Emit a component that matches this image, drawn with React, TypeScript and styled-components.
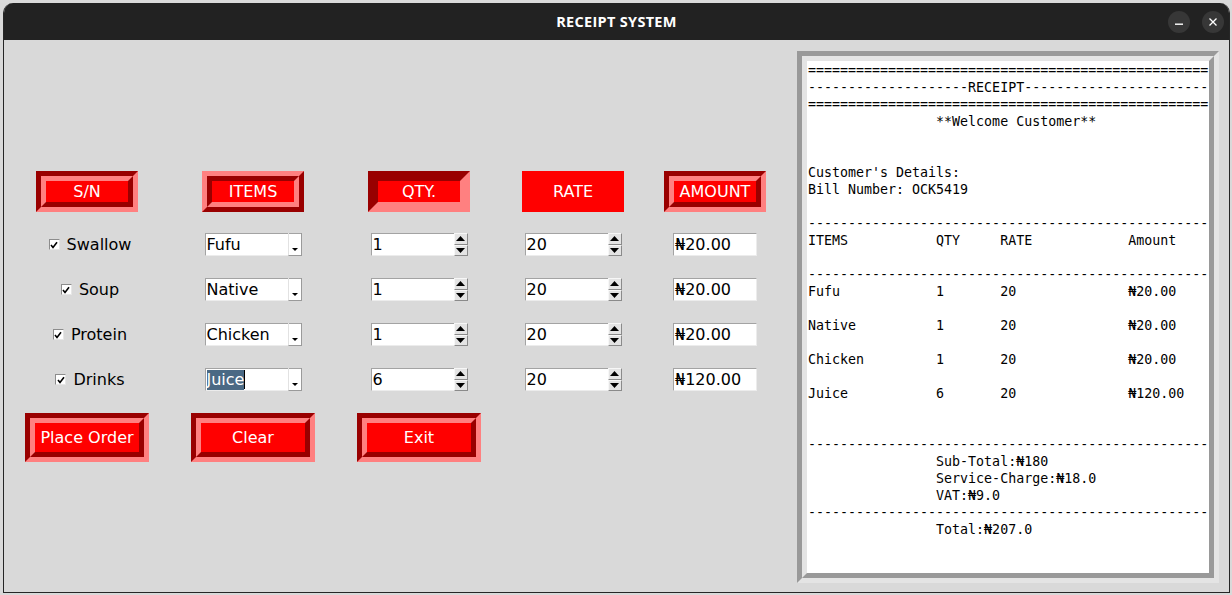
import React from "react";
import styled, { createGlobalStyle, css } from "styled-components";

const GlobalStyle = createGlobalStyle`
  html, body { margin: 0; padding: 0; }
  body {
    background: #d9d9d9;
    font-family: "DejaVu Sans", sans-serif;
    overflow: hidden;
  }
  #root { width: 1232px; height: 595px; }
`;

const DARK = "#990000";
const LIGHT = "#ff8080";
const RED = "#ff0000";

type Relief = "groove" | "ridge" | "sunken" | "flat";

const Desktop = styled.div`
  width: 1232px;
  height: 595px;
  overflow: hidden;
  display: flex;
  flex-direction: column;
  background: #d9d9d9;
`;

const BackStrip = styled.div`
  flex: none;
  height: 3px;
  background: #dadada;
`;

const Window = styled.div`
  flex: none;
  margin-left: 3px;
  width: 1227px;
  height: 590px;
  box-sizing: border-box;
  display: flex;
  flex-direction: column;
  border: 1px solid #262626;
  border-top: none;
  border-radius: 10px 10px 0 0;
  background: #d9d9d9;
  overflow: hidden;
`;

const TitleBar = styled.div`
  flex: none;
  height: 37px;
  background: #222222;
  display: grid;
  grid-template-columns: 1fr auto 1fr;
  align-items: center;
  padding-right: 5px;
  padding-left: 5px;
`;

const Title = styled.div`
  grid-column: 2;
  color: #ffffff;
  font: 700 14.5px "Open Sans", "DejaVu Sans", sans-serif;
  letter-spacing: 0.3px;
`;

const Controls = styled.div`
  grid-column: 3;
  justify-self: end;
  display: flex;
  gap: 12px;
`;

const CircleButton = styled.div`
  width: 22px;
  height: 22px;
  border-radius: 50%;
  background: #373737;
  display: flex;
  align-items: center;
  justify-content: center;
`;

const Content = styled.div`
  flex: 1;
  display: flex;
  align-items: flex-start;
  padding: 11px 10px 0 16px;
`;

const OrderGrid = styled.div`
  flex: none;
  margin-top: 120px;
  display: grid;
  grid-template-columns: 134px 198px 134px 174px 110px;
  grid-template-rows: 51px 45px 45px 45px 45px 60px;
  justify-items: center;
  align-items: center;
`;

const Bevel = styled.div<{ $relief: Relief }>`
  box-sizing: border-box;
  background: ${RED};
  ${({ $relief }) =>
    $relief === "groove"
      ? css`
          border: 5px solid;
          border-color: ${DARK} ${LIGHT} ${LIGHT} ${DARK};
        `
      : $relief === "ridge"
      ? css`
          border: 5px solid;
          border-color: ${LIGHT} ${DARK} ${DARK} ${LIGHT};
        `
      : $relief === "sunken"
      ? css`
          border: 10px solid;
          border-color: ${DARK} ${LIGHT} ${LIGHT} ${DARK};
        `
      : css`
          border: none;
        `}
`;

const BevelFace = styled.div<{ $relief: Relief }>`
  box-sizing: border-box;
  height: 100%;
  display: flex;
  align-items: center;
  justify-content: center;
  color: #ffffff;
  font: 16px "DejaVu Sans", sans-serif;
  white-space: nowrap;
  ${({ $relief }) =>
    $relief === "groove"
      ? css`
          border: 5px solid;
          border-color: ${LIGHT} ${DARK} ${DARK} ${LIGHT};
        `
      : $relief === "ridge"
      ? css`
          border: 5px solid;
          border-color: ${DARK} ${LIGHT} ${LIGHT} ${DARK};
        `
      : css`
          border: none;
        `}
`;

const HeaderCell = styled(Bevel)`
  width: 102px;
  height: 41px;
  align-self: start;
`;

const ActionButton = styled(Bevel)`
  width: 124px;
  height: 49px;
  align-self: end;
  cursor: pointer;
`;

const CheckLabel = styled.label`
  display: flex;
  align-items: center;
  gap: 7px;
  padding-left: 6px;
  font: 16px "DejaVu Sans", sans-serif;
  color: #000000;
`;

const CheckBox = styled.span`
  width: 11px;
  height: 11px;
  box-sizing: border-box;
  background: #ffffff;
  border: 1px solid;
  border-color: #8c8c8c #e6e6e6 #e6e6e6 #8c8c8c;
  display: flex;
  align-items: center;
  justify-content: center;
`;

const Field = styled.div<{ $w: number }>`
  width: ${(p) => p.$w}px;
  height: 23px;
  box-sizing: border-box;
  background: #ffffff;
  border: 1px solid;
  border-color: #a3a3a3 #ececec #ececec #a3a3a3;
  display: flex;
  align-items: stretch;
`;

const FieldText = styled.div`
  flex: 1;
  padding-left: 1px;
  font: 16px/21px "DejaVu Sans", sans-serif;
  color: #000000;
  white-space: nowrap;
  overflow: hidden;
  display: flex;
  align-items: center;
`;

const Selected = styled.span`
  background: #4a6984;
  color: #ffffff;
  line-height: 20px;
`;

const Caret = styled.span`
  width: 1px;
  height: 19px;
  background: #000000;
`;

const ComboArrow = styled.div`
  flex: none;
  width: 14px;
  box-sizing: border-box;
  border-left: 1px solid #e2e2e2;
  border-right: 1px solid #9a9a9a;
  border-bottom: 1px solid #9a9a9a;
  margin: -1px -1px -1px 0;
  display: flex;
  align-items: flex-end;
  justify-content: center;
  padding-bottom: 4px;
`;

const SpinButtons = styled.div`
  flex: none;
  width: 14px;
  display: flex;
  flex-direction: column;
  margin: -1px -1px -1px 0;
`;

const SpinHalf = styled.div`
  flex: 1;
  box-sizing: border-box;
  background: #e4e4e4;
  border: 1px solid;
  border-color: #f7f7f7 #8a8a8a #8a8a8a #f7f7f7;
  display: flex;
  align-items: center;
  justify-content: center;
`;

const ReceiptOuter = styled.div`
  margin-left: auto;
  flex: none;
  width: 422px;
  height: 532px;
  box-sizing: border-box;
  border: 5px solid;
  border-color: #999999 #e4e4e4 #e4e4e4 #999999;
`;

const ReceiptInner = styled.div`
  height: 100%;
  box-sizing: border-box;
  border: 5px solid;
  border-color: #e4e4e4 #999999 #999999 #e4e4e4;
  background: #ffffff;
  padding: 1px 0 0 1px;
  overflow: hidden;
`;

const ReceiptText = styled.pre`
  margin: 0;
  font: 13.3px/17px "DejaVu Sans Mono", monospace;
  color: #000000;
  white-space: pre;
`;

const Check = () => (
  <svg width="8" height="8" viewBox="0 0 8 8">
    <path d="M1 4 L3 6.5 L7 1.2" fill="none" stroke="#000" strokeWidth="1.6" />
  </svg>
);

const DownArrow = () => (
  <svg width="6" height="3" viewBox="0 0 6 3">
    <polygon points="0,0 6,0 3,3" fill="#000" />
  </svg>
);

const UpTri = () => (
  <svg width="9" height="5" viewBox="0 0 9 5">
    <polygon points="0,5 9,5 4.5,0" fill="#000" />
  </svg>
);

const DownTri = () => (
  <svg width="9" height="5" viewBox="0 0 9 5">
    <polygon points="0,0 9,0 4.5,5" fill="#000" />
  </svg>
);

const headers: { text: string; relief: Relief }[] = [
  { text: "S/N", relief: "groove" },
  { text: "ITEMS", relief: "ridge" },
  { text: "QTY.", relief: "sunken" },
  { text: "RATE", relief: "flat" },
  { text: "AMOUNT", relief: "groove" },
];

const rows = [
  { label: "Swallow", item: "Fufu", qty: "1", rate: "20", amount: "₦20.00" },
  { label: "Soup", item: "Native", qty: "1", rate: "20", amount: "₦20.00" },
  { label: "Protein", item: "Chicken", qty: "1", rate: "20", amount: "₦20.00" },
  { label: "Drinks", item: "Juice", qty: "6", rate: "20", amount: "₦120.00", selected: true },
];

const WIDTH = 50;
const pad = (s: string, n: number) => s + " ".repeat(Math.max(0, n - s.length));
const eq = "=".repeat(WIDTH);
const dash = "-".repeat(WIDTH);
const ind = " ".repeat(16);

const receiptLines = [
  eq,
  "-".repeat(20) + "RECEIPT" + "-".repeat(WIDTH - 27),
  eq,
  ind + "**Welcome Customer**",
  "",
  "",
  "Customer's Details:",
  "Bill Number: OCK5419",
  "",
  dash,
  pad("ITEMS", 16) + pad("QTY", 8) + pad("RATE", 16) + "Amount",
  "",
  dash,
  ...rows.flatMap((r, i) => {
    const line = pad(r.item, 16) + pad(r.qty, 8) + pad(r.rate, 16) + r.amount;
    return i < rows.length - 1 ? [line, ""] : [line];
  }),
  "",
  "",
  dash,
  ind + "Sub-Total:₦180",
  ind + "Service-Charge:₦18.0",
  ind + "VAT:₦9.0",
  dash,
  ind + "Total:₦207.0",
];

const Relieved: React.FC<{ relief: Relief; as: typeof HeaderCell; children: React.ReactNode }> = ({
  relief,
  as: Comp,
  children,
}) => (
  <Comp $relief={relief}>
    <BevelFace $relief={relief}>{children}</BevelFace>
  </Comp>
);

const Spin: React.FC<{ value: string }> = ({ value }) => (
  <Field $w={97}>
    <FieldText>{value}</FieldText>
    <SpinButtons>
      <SpinHalf>
        <UpTri />
      </SpinHalf>
      <SpinHalf>
        <DownTri />
      </SpinHalf>
    </SpinButtons>
  </Field>
);

export default function App() {
  return (
    <>
      <GlobalStyle />
      <Desktop>
        <BackStrip />
        <Window>
          <TitleBar>
            <Title>RECEIPT SYSTEM</Title>
            <Controls>
              <CircleButton>
                <svg width="10" height="10" viewBox="0 0 10 10">
                  <rect x="1" y="6.5" width="8" height="1.4" fill="#fff" />
                </svg>
              </CircleButton>
              <CircleButton>
                <svg width="10" height="10" viewBox="0 0 10 10">
                  <path d="M1.5 1.5 L8.5 8.5 M8.5 1.5 L1.5 8.5" stroke="#fff" strokeWidth="1.3" />
                </svg>
              </CircleButton>
            </Controls>
          </TitleBar>
          <Content>
            <OrderGrid>
              {headers.map((h) => (
                <Relieved key={h.text} relief={h.relief} as={HeaderCell}>
                  {h.text}
                </Relieved>
              ))}
              {rows.map((r) => (
                <React.Fragment key={r.label}>
                  <CheckLabel>
                    <CheckBox>
                      <Check />
                    </CheckBox>
                    {r.label}
                  </CheckLabel>
                  <Field $w={97}>
                    <FieldText>
                      {r.selected ? (
                        <>
                          <Selected>{r.item}</Selected>
                          <Caret />
                        </>
                      ) : (
                        r.item
                      )}
                    </FieldText>
                    <ComboArrow>
                      <DownArrow />
                    </ComboArrow>
                  </Field>
                  <Spin value={r.qty} />
                  <Spin value={r.rate} />
                  <Field $w={84}>
                    <FieldText>{r.amount}</FieldText>
                  </Field>
                </React.Fragment>
              ))}
              <Relieved relief="groove" as={ActionButton}>
                Place Order
              </Relieved>
              <Relieved relief="groove" as={ActionButton}>
                Clear
              </Relieved>
              <Relieved relief="groove" as={ActionButton}>
                Exit
              </Relieved>
            </OrderGrid>
            <ReceiptOuter>
              <ReceiptInner>
                <ReceiptText>{receiptLines.join("\n")}</ReceiptText>
              </ReceiptInner>
            </ReceiptOuter>
          </Content>
        </Window>
      </Desktop>
    </>
  );
}
